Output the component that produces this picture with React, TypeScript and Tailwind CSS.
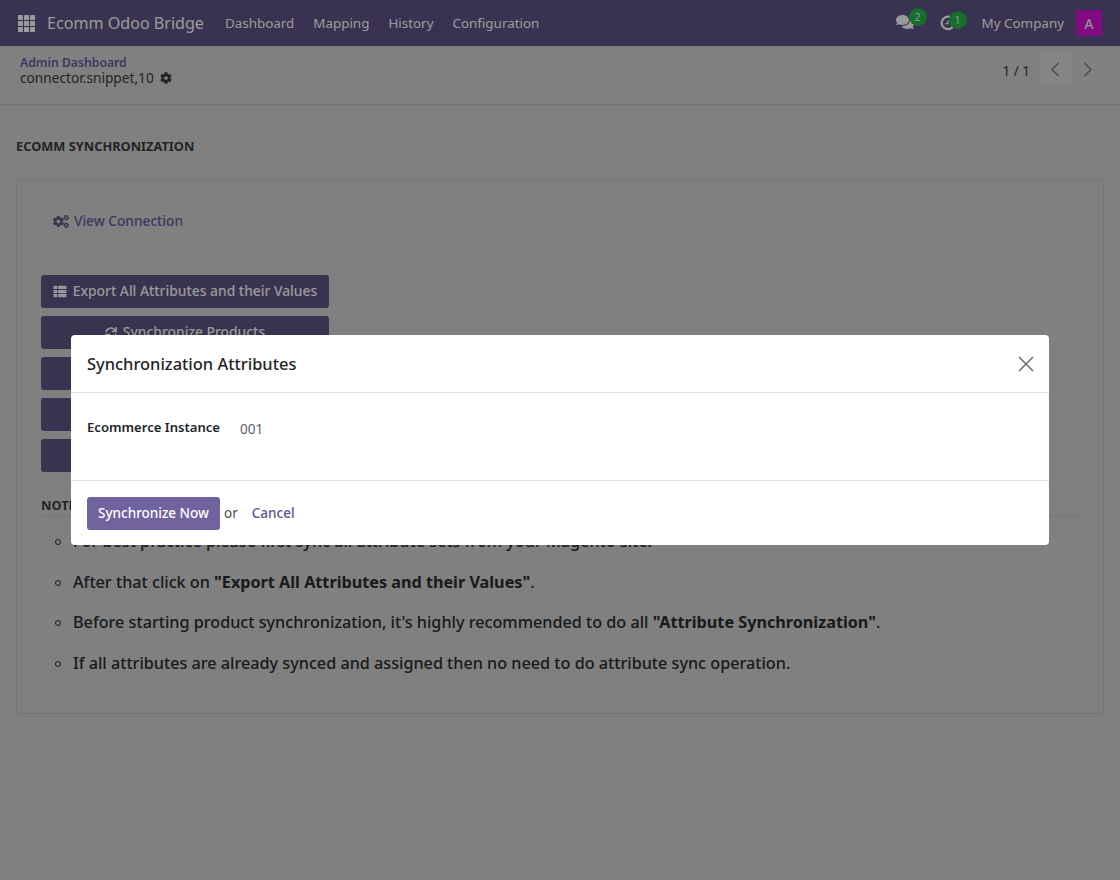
import React from 'react';
import { FaCog, FaCogs, FaComments, FaSync, FaThList } from 'react-icons/fa';

const navItems = ['Dashboard', 'Mapping', 'History', 'Configuration'];
const syncButtons = ['Synchronize Products', 'Synchronize Categories', 'Synchronize Attributes', 'Synchronize Orders'];

function AppsIcon() {
  return (
    <svg width="17" height="17" viewBox="0 0 17 17" className="fill-white">
      {[0, 6, 12].map((y) =>
        [0, 6, 12].map((x) => <rect key={`${x}-${y}`} x={x} y={y} width="5" height="5" rx="0.5" />),
      )}
    </svg>
  );
}

function ActivityIcon() {
  return (
    <svg width="16" height="16" viewBox="0 0 18 18" fill="none" className="stroke-white">
      <path d="M11 2.2 A7 7 0 1 0 15.9 9.5" strokeWidth="2.6" />
      <path d="M9 6v3.6H5.8" strokeWidth="1.4" />
    </svg>
  );
}

function Badge({ value, className }: { value: number; className: string }) {
  return (
    <span
      className={`absolute flex h-[18px] w-[18px] items-center justify-center rounded-full bg-[#25b84c] text-[10.5px] leading-none text-[#e4f5e8] ${className}`}
    >
      {value}
    </span>
  );
}

export default function App() {
  return (
    <div className="relative h-[880px] w-[1120px] overflow-hidden bg-[#d5d5d5] font-['Noto_Sans',sans-serif] text-[#3a3d42]">
      <header className="flex h-[46px] items-center bg-[#5f5485] text-white">
        <div className="ml-[18px] flex">
          <AppsIcon />
        </div>
        <span className="ml-[12px] text-[16.1px]">Ecomm Odoo Bridge</span>
        <nav className="ml-[21px] flex gap-[19px] pt-px text-[13.4px]">
          {navItems.map((item) => (
            <span key={item}>{item}</span>
          ))}
        </nav>
        <div className="ml-auto flex items-center">
          <div className="relative mr-[26px] flex -translate-y-px">
            <FaComments className="h-[18px] w-[18px] text-white" />
            <Badge value={2} className="-top-[5px] left-[13px]" />
          </div>
          <div className="relative mr-[26px] flex">
            <ActivityIcon />
            <Badge value={1} className="-top-[4px] left-[9px]" />
          </div>
          <span className="text-[13.4px]">My Company</span>
          <span className="mr-[18px] ml-[12px] flex h-[26px] w-[26px] items-center justify-center bg-[#d815d8] text-[14px]">
            A
          </span>
        </div>
      </header>

      <div className="flex h-[59px] justify-between border-b border-[#c4c4c4] pr-[16px] pl-[20px]">
        <div className="pt-[9px]">
          <div className="text-[12.2px] leading-[15px] font-semibold text-[#685ca0]">Admin Dashboard</div>
          <div className="flex items-center text-[13.7px] leading-[16px]">
            connector.snippet,10
            <FaCog className="ml-[6px] h-[12px] w-[12px]" />
          </div>
        </div>
        <div className="flex items-start pt-[7px]">
          <span className="mt-[9px] mr-[9px] text-[13.5px] leading-[18px]">1 / 1</span>
          <div className="flex h-[33px] w-[65px] overflow-hidden rounded-[3px] text-[#7a7a7a]">
            <span className="flex flex-1 items-center justify-center bg-[#dcdcdc]">
              <svg width="10" height="15" viewBox="0 0 10 15" fill="none" stroke="currentColor" strokeWidth="1.3">
                <path d="M8.5 1 2 7.5 8.5 14" />
              </svg>
            </span>
            <span className="flex flex-1 items-center justify-center bg-[#d8d8d8]">
              <svg width="10" height="15" viewBox="0 0 10 15" fill="none" stroke="currentColor" strokeWidth="1.3">
                <path d="M1.5 1 8 7.5 1.5 14" />
              </svg>
            </span>
          </div>
        </div>
      </div>

      <main className="px-[16px]">
        <h2 className="mt-[33px] text-[12.8px] leading-[17px] font-bold">ECOMM SYNCHRONIZATION</h2>
        <section className="mt-[25px] h-[534px] w-[1088px] rounded-[3px] border border-[#c4c4c4] pr-[23px] pl-[24px]">
          <div className="flex items-center pt-[31px] pl-[12px] text-[13.7px] leading-[18px] font-medium text-[#685ca0]">
            <FaCogs className="mr-[5px] h-[15px] w-[16px] text-[#5f5c80]" />
            View Connection
          </div>
          <div className="mt-[45px] flex w-[288px] flex-col gap-[8px] text-[13.85px] font-medium text-white">
            <div className="flex h-[33px] items-center justify-center rounded-[3px] bg-[#5f5485]">
              <FaThList className="mr-[6px] h-[13px] w-[14px]" />
              Export All Attributes and their Values
            </div>
            {syncButtons.map((label) => (
              <div key={label} className="flex h-[33px] items-center justify-center rounded-[3px] bg-[#5f5485]">
                <FaSync className="mr-[6px] h-[12px] w-[12px]" />
                {label}
              </div>
            ))}
          </div>
          <div className="mt-[25px] border-b border-[#c4c4c4] pb-[2px] text-[12.8px] leading-[17px] font-bold">
            NOTE
          </div>
          <ul className="mt-[14px] flex flex-col gap-[20px] pl-[32px] text-[16.2px] leading-[20.5px] font-medium text-[#2a2d30]">
            {[
              <>For best practice please first sync all attribute sets from your Magento site.</>,
              <>
                After that click on <b>"Export All Attributes and their Values"</b>.
              </>,
              <>
                Before starting product synchronization, it's highly recommended to do all{' '}
                <b>"Attribute Synchronization"</b>.
              </>,
              <>If all attributes are already synced and assigned then no need to do attribute sync operation.</>,
            ].map((item, i) => (
              <li key={i} className="relative">
                <span className="absolute top-[8px] -left-[18px] h-[6px] w-[6px] rounded-full border border-[#2a2d30]" />
                {item}
              </li>
            ))}
          </ul>
        </section>
      </main>

      {/* dialog backdrop */}
      <div className="absolute inset-0 flex items-start justify-center bg-black/40 pt-[335px]">
        <div className="w-[978px] rounded-[4px] bg-white">
          <div className="flex h-[58px] items-center justify-between border-b border-[#e2e4e8] pt-px pr-[15px] pl-[16px]">
            <h1 className="text-[16.45px] font-medium text-[#1f2328]">Synchronization Attributes</h1>
            <svg width="16" height="16" viewBox="0 0 16 16" className="stroke-[#6b6b6b]" strokeWidth="1.5">
              <path d="M1 1l14 14M15 1 1 15" />
            </svg>
          </div>
          <div className="flex h-[88px] items-start border-b border-[#e2e4e8] pt-[25px] pl-[16px]">
            <span className="w-[153px] text-[13.1px] leading-[18px] font-semibold text-[#212529]">
              Ecommerce Instance
            </span>
            <span className="mt-[2px] text-[13.5px] leading-[18px] text-[#5a6067]">001</span>
          </div>
          <div className="flex h-[64px] items-center pl-[16px] text-[13.5px]">
            <button className="h-[33px] w-[133px] rounded-[3px] bg-[#71639e] font-medium text-white">
              Synchronize Now
            </button>
            <span className="ml-[4px] text-[#495057]">or</span>
            <span className="ml-[14px] font-medium text-[#5e5290]">Cancel</span>
          </div>
        </div>
      </div>
    </div>
  );
}
